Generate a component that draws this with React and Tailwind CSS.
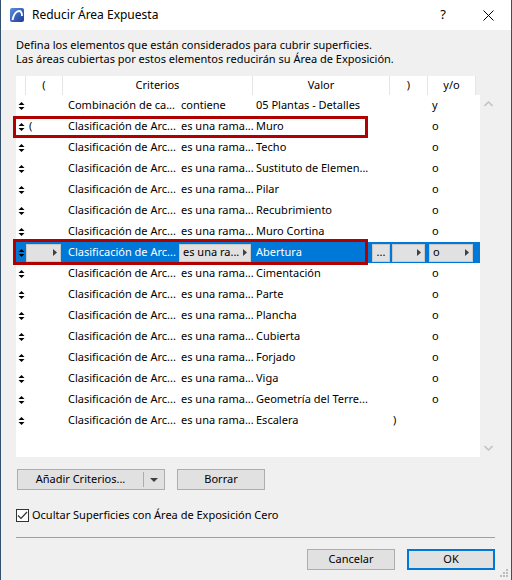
import React from 'react'

const rows = [
  { open: '', crit: 'Combinación de ca...', op: 'contiene', val: '05 Plantas - Detalles', close: '', yo: 'y' },
  { open: '(', crit: 'Clasificación de Arc...', op: 'es una rama...', val: 'Muro', close: '', yo: 'o' },
  { open: '', crit: 'Clasificación de Arc...', op: 'es una rama...', val: 'Techo', close: '', yo: 'o' },
  { open: '', crit: 'Clasificación de Arc...', op: 'es una rama...', val: 'Sustituto de Elemen...', close: '', yo: 'o' },
  { open: '', crit: 'Clasificación de Arc...', op: 'es una rama...', val: 'Pilar', close: '', yo: 'o' },
  { open: '', crit: 'Clasificación de Arc...', op: 'es una rama...', val: 'Recubrimiento', close: '', yo: 'o' },
  { open: '', crit: 'Clasificación de Arc...', op: 'es una rama...', val: 'Muro Cortina', close: '', yo: 'o' },
  { selected: true, crit: 'Clasificación de Arc...', op: 'es una ra...', val: 'Abertura', yo: 'o' },
  { open: '', crit: 'Clasificación de Arc...', op: 'es una rama...', val: 'Cimentación', close: '', yo: 'o' },
  { open: '', crit: 'Clasificación de Arc...', op: 'es una rama...', val: 'Parte', close: '', yo: 'o' },
  { open: '', crit: 'Clasificación de Arc...', op: 'es una rama...', val: 'Plancha', close: '', yo: 'o' },
  { open: '', crit: 'Clasificación de Arc...', op: 'es una rama...', val: 'Cubierta', close: '', yo: 'o' },
  { open: '', crit: 'Clasificación de Arc...', op: 'es una rama...', val: 'Forjado', close: '', yo: 'o' },
  { open: '', crit: 'Clasificación de Arc...', op: 'es una rama...', val: 'Viga', close: '', yo: 'o' },
  { open: '', crit: 'Clasificación de Arc...', op: 'es una rama...', val: 'Geometría del Terre...', close: '', yo: 'o' },
  { open: '', crit: 'Clasificación de Arc...', op: 'es una rama...', val: 'Escalera', close: ')', yo: '' },
]

// drag handle: up triangle over down triangle
function Handle() {
  return (
    <svg width="7" height="8" viewBox="0 0 7 8" className="shrink-0">
      <path d="M0.5 3 L3.5 0 L6.5 3 Z" fill="#000" />
      <path d="M0.5 5 L6.5 5 L3.5 8 Z" fill="#000" />
    </svg>
  )
}

function Arrow() {
  return (
    <svg width="4" height="7" viewBox="0 0 4 7" className="shrink-0">
      <path d="M0 0 L4 3.5 L0 7 Z" fill="#404040" />
    </svg>
  )
}

function DropBox({ className, children }) {
  return (
    <div className={`flex h-[18px] items-center border border-[#c8c8c8] bg-[#e1e1e1] pr-[3px] text-black ${className}`}>
      <span className="flex-1 overflow-hidden whitespace-nowrap pl-[3px]">{children}</span>
      <Arrow />
    </div>
  )
}

function Row({ r }) {
  if (r.selected) {
    return (
      <div className="flex h-[21px] items-center bg-[#0078d7]">
        <div className="flex w-[10px] shrink-0 pl-[2px]"><Handle /></div>
        <div className="w-[37px] shrink-0"><DropBox className="w-[35px]" /></div>
        <div className="w-[115px] shrink-0 pl-[5px] text-white">{r.crit}</div>
        <div className="w-[75px] shrink-0 pl-[1px]"><DropBox className="w-[72px]">{r.op}</DropBox></div>
        <div className="flex w-[137px] shrink-0 items-center">
          <span className="flex-1 pl-[3px] text-white">{r.val}</span>
          <div className="flex h-[18px] w-[18px] items-center justify-center border border-[#c8c8c8] bg-[#e1e1e1] pb-[3px] leading-none">...</div>
        </div>
        <div className="w-[38px] shrink-0 pl-[2px]"><DropBox className="w-[33px]" /></div>
        <div className="w-[48px] shrink-0 pl-[1px]"><DropBox className="w-[44px]">{r.yo}</DropBox></div>
      </div>
    )
  }
  return (
    <div className="flex h-[21px] items-center whitespace-nowrap">
      <div className="flex w-[10px] shrink-0 pl-[2px]"><Handle /></div>
      <div className="w-[37px] shrink-0 pl-[3px]">{r.open}</div>
      <div className="w-[115px] shrink-0 pl-[5px]">{r.crit}</div>
      <div className="w-[75px] shrink-0 pl-[3px]">{r.op}</div>
      <div className="w-[137px] shrink-0 pl-[3px]">{r.val}</div>
      <div className="w-[38px] shrink-0 pl-[3px]">{r.close}</div>
      <div className="w-[48px] shrink-0 pl-[4px]">{r.yo}</div>
    </div>
  )
}

export default function App() {
  return (
    <div
      className="flex h-[580px] w-[512px] flex-col overflow-hidden border-x border-[#34506e] bg-[#f0f0f0] text-[11px] text-black"
      style={{ fontFamily: '"Noto Sans", "Liberation Sans", sans-serif' }}
    >
      {/* title bar */}
      <div className="flex h-[30px] shrink-0 items-center bg-white">
        <svg width="14" height="14" viewBox="0 0 14 14" className="ml-[9px]">
          <defs>
            <linearGradient id="ac" x1="0" y1="0" x2="1" y2="1">
              <stop offset="0" stopColor="#5b8fe0" />
              <stop offset="1" stopColor="#1b3d96" />
            </linearGradient>
          </defs>
          <rect x="0" y="0" width="14" height="14" rx="2" fill="url(#ac)" />
          <path d="M2.5 12 C3.5 6 6.5 3 9 3 C11 3 12 5 12 8" stroke="#fff" strokeWidth="1.8" fill="none" />
        </svg>
        <span className="ml-[8px] text-[12px]">Reducir Área Expuesta</span>
        <span className="ml-auto text-[13px]">?</span>
        <svg width="11" height="11" viewBox="0 0 11 11" className="ml-[37px] mr-[17px]">
          <path d="M0.5 0.5 L10.5 10.5 M10.5 0.5 L0.5 10.5" stroke="#000" strokeWidth="1" />
        </svg>
      </div>

      <div className="flex flex-1 flex-col pl-[15px] pr-[15px]">
        <p className="mt-[8px] leading-[14px]">
          Defina los elementos que están considerados para cubrir superficies.
          <br />
          Las áreas cubiertas por estos elementos reducirán su Área de Exposición.
        </p>

        {/* table */}
        <div className="mt-[10px] w-[480px]">
          <div className="flex h-[19px] items-center">
            <div className="flex h-full w-[460px] bg-white">
              <div className="h-full w-[10px] border-r border-[#e5e5e5]" />
              <div className="flex h-full w-[37px] items-center justify-center border-r border-[#e5e5e5]">(</div>
              <div className="flex h-full w-[190px] items-center justify-center border-r border-[#e5e5e5]">Criterios</div>
              <div className="flex h-full w-[137px] items-center justify-center border-r border-[#e5e5e5]">Valor</div>
              <div className="flex h-full w-[38px] items-center justify-center border-r border-[#e5e5e5]">)</div>
              <div className="flex h-full w-[48px] items-center justify-center border-r border-[#e5e5e5]">y/o</div>
            </div>
          </div>
          <div className="flex h-[362px]">
            <div className="relative w-[464px] bg-white">
              {rows.map((r, i) => (
                <Row key={i} r={r} />
              ))}
              <div className="absolute left-[-3px] top-[21px] h-[22px] w-[355px] border-[3px] border-[#b00000]" />
              <div className="absolute left-[-3px] top-[144px] h-[26px] w-[355px] border-[3px] border-[#b00000]" />
            </div>
            <div className="flex w-[16px] flex-col items-center justify-between py-[6px]">
              <svg width="9" height="6" viewBox="0 0 9 6">
                <path d="M0.5 5 L4.5 1 L8.5 5" stroke="#c4c4c4" strokeWidth="1.6" fill="none" />
              </svg>
              <svg width="9" height="6" viewBox="0 0 9 6">
                <path d="M0.5 1 L4.5 5 L8.5 1" stroke="#c4c4c4" strokeWidth="1.6" fill="none" />
              </svg>
            </div>
          </div>
        </div>

        {/* action buttons */}
        <div className="mt-[12px] flex gap-[12px] pl-[1px]">
          <div className="flex h-[21px] w-[148px] items-center border border-[#adadad] bg-[#e1e1e1]">
            <span className="flex-1 text-center">Añadir Criterios...</span>
            <div className="h-[15px] w-px bg-[#adadad]" />
            <div className="flex w-[20px] justify-center">
              <svg width="8" height="4" viewBox="0 0 8 4">
                <path d="M0 0 L8 0 L4 4 Z" fill="#404040" />
              </svg>
            </div>
          </div>
          <div className="flex h-[21px] w-[88px] items-center justify-center border border-[#adadad] bg-[#e1e1e1]">Borrar</div>
        </div>

        <div className="mt-[17px] flex items-center">
          <div className="flex h-[13px] w-[13px] items-center justify-center border border-[#333] bg-white">
            <svg width="11" height="9" viewBox="0 0 11 9">
              <path d="M1 4.5 L4 7.5 L10 1" stroke="#333" strokeWidth="1.2" fill="none" />
            </svg>
          </div>
          <span className="ml-[3px]">Ocultar Superficies con Área de Exposición Cero</span>
        </div>

        <div className="mt-[13px] h-px w-[479px] bg-[#a0a0a0]" />

        <div className="mt-[11px] flex justify-end gap-[12px] pr-[1px]">
          <div className="flex h-[21px] w-[88px] items-center justify-center border border-[#adadad] bg-[#e1e1e1]">Cancelar</div>
          <div className="flex h-[21px] w-[88px] items-center justify-center border-2 border-[#0078d7] bg-[#e1e1e1]">OK</div>
        </div>
      </div>

      <div className="relative h-0">
        <svg width="9" height="9" viewBox="0 0 9 9" className="absolute bottom-[2px] right-[2px]">
          <g fill="#bcbcbc">
            <rect x="6" y="0" width="2" height="2" />
            <rect x="3" y="3" width="2" height="2" />
            <rect x="6" y="3" width="2" height="2" />
            <rect x="0" y="6" width="2" height="2" />
            <rect x="3" y="6" width="2" height="2" />
            <rect x="6" y="6" width="2" height="2" />
          </g>
        </svg>
      </div>
    </div>
  )
}
